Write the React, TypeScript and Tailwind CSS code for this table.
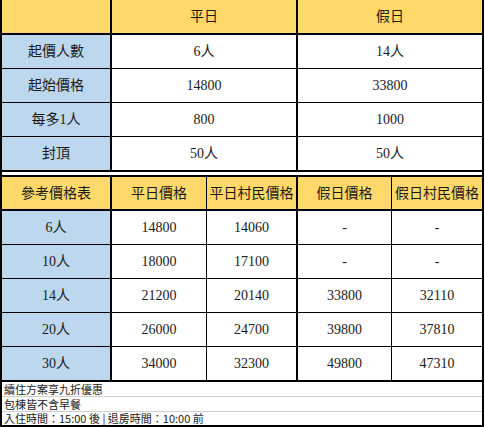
import React from "react";

const F = "font-['Liberation_Serif','Noto_Sans_CJK_TC',serif] text-[14px] text-[#1a1a1a]";

const topRows: [string, string, string][] = [
  ["起價人數", "6人", "14人"],
  ["起始價格", "14800", "33800"],
  ["每多1人", "800", "1000"],
  ["封頂", "50人", "50人"],
];

const priceRows: [string, string, string, string, string][] = [
  ["6人", "14800", "14060", "-", "-"],
  ["10人", "18000", "17100", "-", "-"],
  ["14人", "21200", "20140", "33800", "32110"],
  ["20人", "26000", "24700", "39800", "37810"],
  ["30人", "34000", "32300", "49800", "47310"],
];

const cell = "flex items-center justify-center";

export default function App() {
  return (
    <div className="w-[485px] h-[427px] bg-white">
      <div className={`w-[484px] border-l-2 border-r-2 border-b-2 border-black ${F}`}>
        {/* Top table */}
        <div className="flex h-[35px] bg-[#fed96a] border-b-2 border-black">
          <div className={`${cell} w-[110px] border-r-2 border-black`}></div>
          <div className={`${cell} w-[186px] border-r-2 border-black`}>平日</div>
          <div className={`${cell} flex-1`}>假日</div>
        </div>
        {topRows.map((r, i) => (
          <div
            key={i}
            className={`flex ${i === topRows.length - 1 ? "h-[35px] border-b-2" : "h-[34px] border-b"} border-black`}
          >
            <div className={`${cell} w-[110px] bg-[#bdd7ee] border-r-2 border-black`}>{r[0]}</div>
            <div className={`${cell} w-[186px] border-r-2 border-black`}>{r[1]}</div>
            <div className={`${cell} flex-1`}>{r[2]}</div>
          </div>
        ))}

        <div className="h-[3px]"></div>

        {/* Price table */}
        <div className="flex h-[36px] bg-[#fed96a] border-t-2 border-b-2 border-black">
          <div className={`${cell} w-[110px] border-r-2 border-black`}>參考價格表</div>
          <div className={`${cell} w-[95px] border-r border-black`}>平日價格</div>
          <div className={`${cell} w-[91px] border-r-2 border-black`}>平日村民價格</div>
          <div className={`${cell} w-[94px] border-r border-black`}>假日價格</div>
          <div className={`${cell} flex-1`}>假日村民價格</div>
        </div>
        {priceRows.map((r, i) => (
          <div
            key={i}
            className={`flex ${i === priceRows.length - 1 ? "h-[35px] border-b-2" : "h-[34px] border-b"} border-black`}
          >
            <div className={`${cell} w-[110px] bg-[#bdd7ee] border-r-2 border-black`}>{r[0]}</div>
            <div className={`${cell} w-[95px] border-r border-black`}>{r[1]}</div>
            <div className={`${cell} w-[91px] border-r-2 border-black`}>{r[2]}</div>
            <div className={`${cell} w-[94px] border-r border-black`}>{r[3]}</div>
            <div className={`${cell} flex-1`}>{r[4]}</div>
          </div>
        ))}

        {/* Notes */}
        <div className="font-['Noto_Sans_CJK_TC','Noto_Sans',sans-serif] text-[11px] text-[#222] leading-none">
          <div className="h-[15px] flex items-center pl-[2px] border-b border-[#cfcfcf]">續住方案享九折優惠</div>
          <div className="h-[15px] flex items-center pl-[2px] border-b border-[#cfcfcf]">包棟皆不含早餐</div>
          <div className="h-[13px] flex items-center pl-[2px] whitespace-pre">入住時間：15:00 後 | 退房時間：10:00 前</div>
        </div>
      </div>
    </div>
  );
}
